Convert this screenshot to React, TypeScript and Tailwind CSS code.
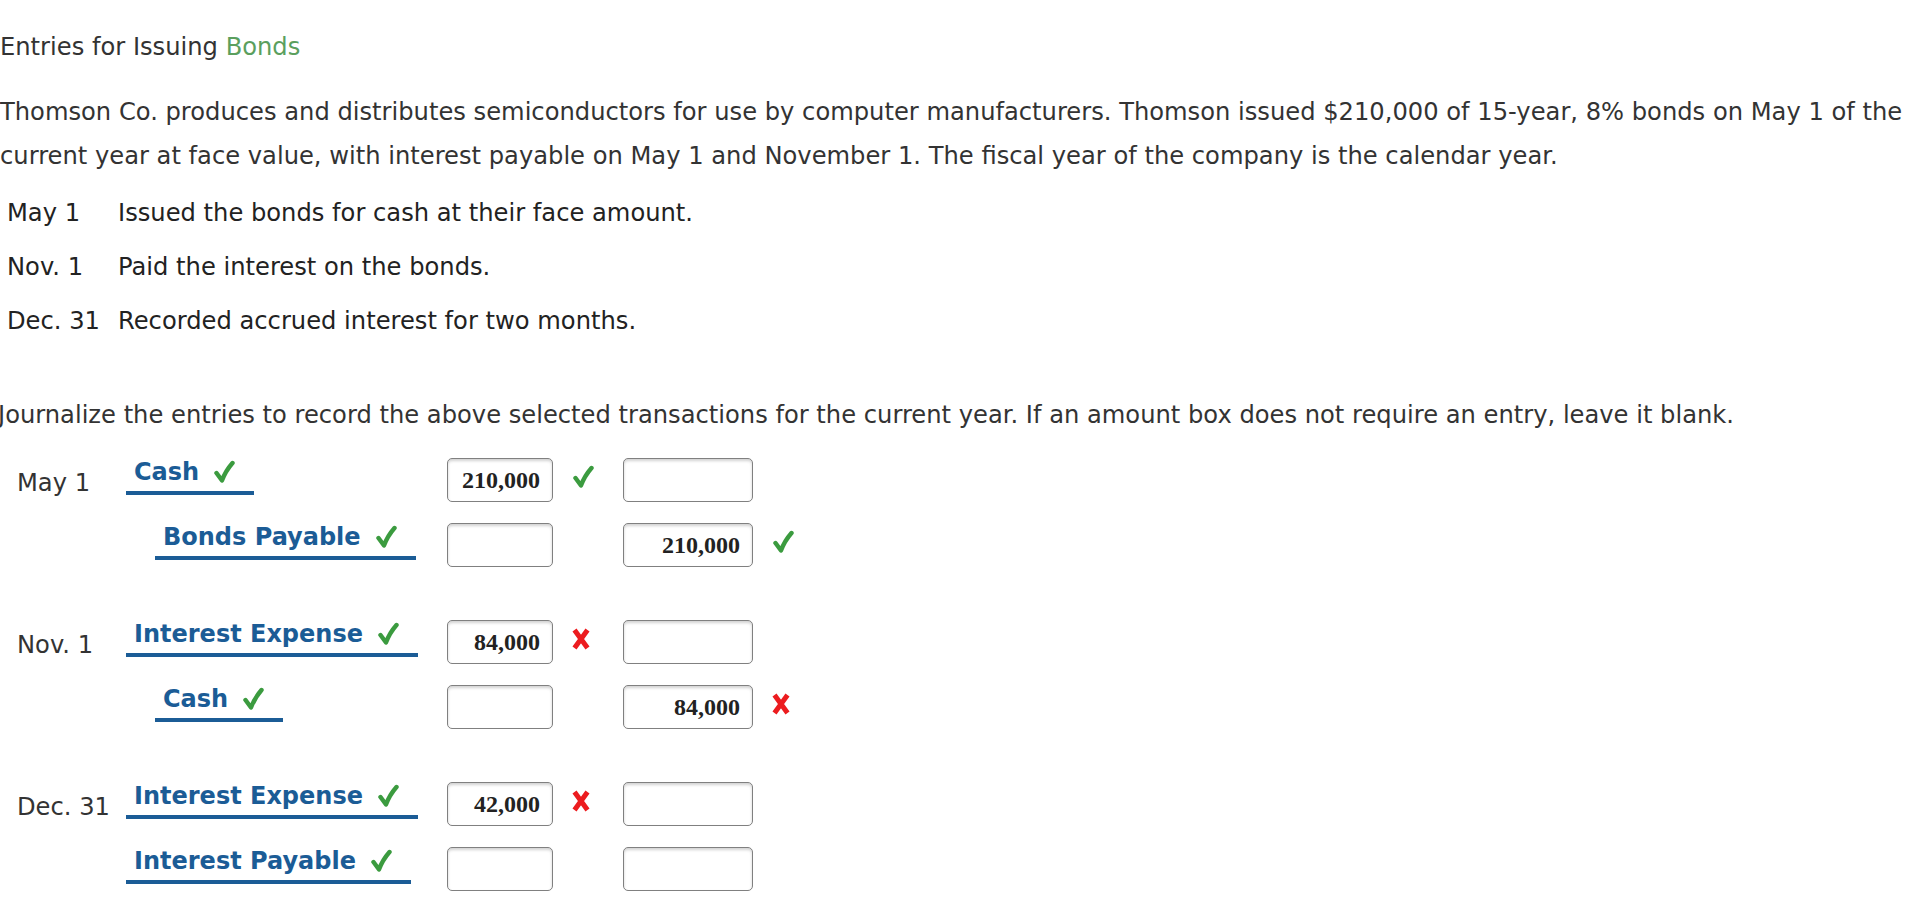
import React from "react";

const Check = ({ className = "" }: { className?: string }) => (
  <svg viewBox="0 0 24 24" className={className} width="24" height="24">
    <path d="M4.5 13 L10 20.5 Q13.5 11 20.5 3" fill="none" stroke="#3b9b3f" strokeWidth="4.4" strokeLinecap="round" strokeLinejoin="round" />
  </svg>
);

const Cross = ({ className = "" }: { className?: string }) => (
  <svg viewBox="0 0 20 24" className={className} width="20" height="24">
    <path d="M3.5 3 L16.5 21 M16.5 3 L3.5 21" fill="none" stroke="#ec1c1f" strokeWidth="5" strokeLinecap="butt" />
  </svg>
);

type Mark = "check" | "cross" | null;

type Row = {
  date?: string;
  account: string;
  credit: boolean;
  debit?: string;
  debitMark?: Mark;
  creditAmt?: string;
  creditMark?: Mark;
};

const groups: Row[][] = [
  [
    { date: "May 1", account: "Cash", credit: false, debit: "210,000", debitMark: "check" },
    { account: "Bonds Payable", credit: true, creditAmt: "210,000", creditMark: "check" },
  ],
  [
    { date: "Nov. 1", account: "Interest Expense", credit: false, debit: "84,000", debitMark: "cross" },
    { account: "Cash", credit: true, creditAmt: "84,000", creditMark: "cross" },
  ],
  [
    { date: "Dec. 31", account: "Interest Expense", credit: false, debit: "42,000", debitMark: "cross" },
    { account: "Interest Payable", credit: false },
  ],
];

const MarkIcon = ({ m }: { m?: Mark }) => {
  if (m === "check") return <Check />;
  if (m === "cross") return <Cross />;
  return null;
};

const Box = ({ value, w }: { value?: string; w: string }) => (
  <div
    className={`${w} h-[44px] shrink-0 rounded-[5px] border-[1.5px] border-[#808080] bg-white shadow-[inset_0_2px_3px_rgba(0,0,0,0.18)] flex items-center justify-end pr-[12px] font-['Liberation_Serif',serif] font-bold text-[24px] text-[#222]`}
  >
    {value}
  </div>
);

export default function App() {
  return (
    <div className="min-h-screen bg-white font-['DejaVu_Sans',Verdana,sans-serif] text-[24.2px] text-[#333] overflow-hidden">
      <div className="pt-[25px] leading-[44px]">
        Entries for Issuing <span className="text-[#5b9f5e]">Bonds</span>
      </div>

      <div className="mt-[21px] leading-[44px] pr-[8px]">
        Thomson Co. produces and distributes semiconductors for use by computer manufacturers. Thomson issued $210,000 of
        15-year, 8% bonds on May 1 of the current year at face value, with interest payable on May 1 and November 1. The
        fiscal year of the company is the calendar year.
      </div>

      <div className="mt-[8px] pl-[7px] text-[#222]">
        {[
          ["May 1", "Issued the bonds for cash at their face amount."],
          ["Nov. 1", "Paid the interest on the bonds."],
          ["Dec. 31", "Recorded accrued interest for two months."],
        ].map(([d, t]) => (
          <div key={d} className="flex h-[54px] items-center">
            <div className="w-[111px] shrink-0">{d}</div>
            <div>{t}</div>
          </div>
        ))}
      </div>

      <div className="mt-[45px] leading-[44px] -ml-[2px]">
        Journalize the entries to record the above selected transactions for the current year. If an amount box does not
        require an entry, leave it blank.
      </div>

      <div className="mt-[21px] pl-[17px] flex flex-col gap-[53px]">
        {groups.map((g, gi) => (
          <div key={gi} className="flex flex-col gap-[21px]">
            {g.map((r, ri) => (
              <div key={ri} className="flex h-[44px] items-start">
                <div className="w-[109px] shrink-0 self-center mt-[7px] text-[#333]">{r.date}</div>
                <div className="w-[321px] shrink-0 flex items-start">
                  <div
                    className={`flex items-center gap-[13px] border-b-[4px] border-[#1b5c96] pl-[8px] pr-[18px] pb-[5px] h-[37px] font-bold text-[#1b5c96] text-[24px] leading-[28px] ${r.credit ? "ml-[29px]" : ""}`}
                  >
                    <span>{r.account}</span>
                    <Check />
                  </div>
                </div>
                <Box w="w-[106px]" value={r.debit} />
                <div className="w-[70px] shrink-0 h-[44px] flex items-center pl-[18px] -mt-[3px]">
                  <MarkIcon m={r.debitMark} />
                </div>
                <Box w="w-[130px]" value={r.creditAmt} />
                <div className="w-[70px] shrink-0 h-[44px] flex items-center pl-[18px] -mt-[3px]">
                  <MarkIcon m={r.creditMark} />
                </div>
              </div>
            ))}
          </div>
        ))}
      </div>
    </div>
  );
}
